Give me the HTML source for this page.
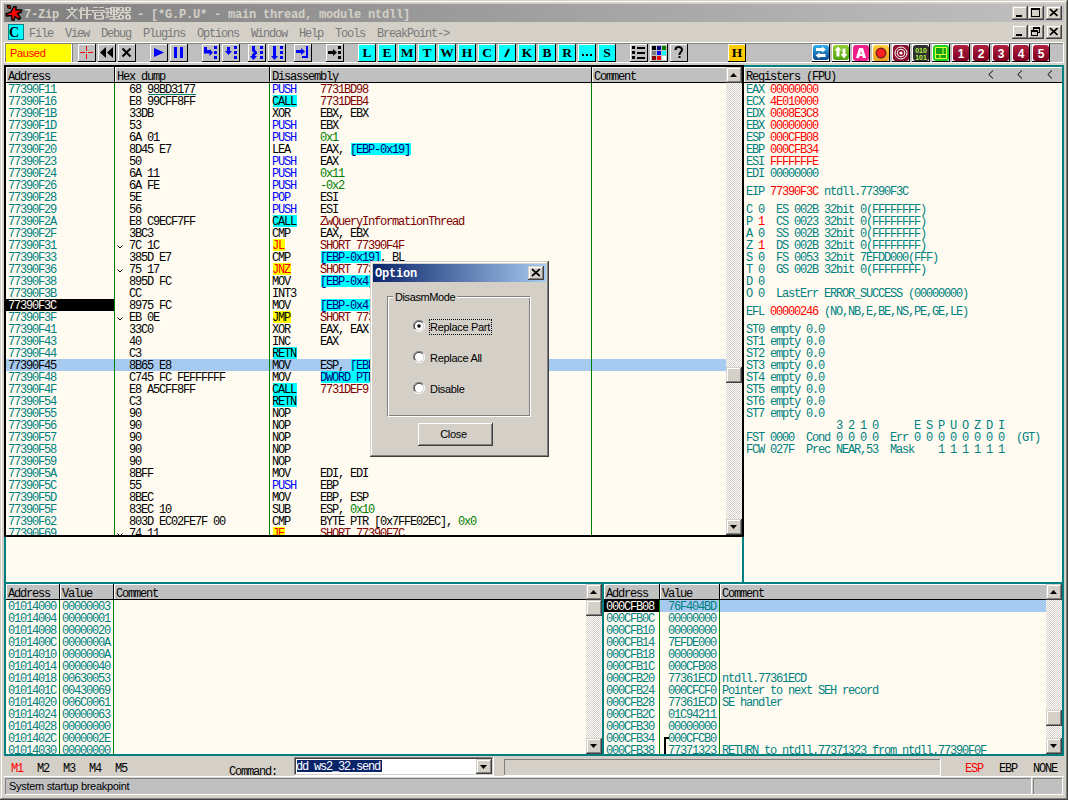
<!DOCTYPE html><html><head><meta charset="utf-8"><style>
*{margin:0;padding:0}
html,body{width:1068px;height:800px;overflow:hidden;background:#d4d0c8}
body{position:relative}
div,svg{position:absolute}
div div, div svg{position:absolute}
.m{font-family:"Liberation Mono",monospace;font-size:12px;letter-spacing:-1.2px;line-height:12px;white-space:pre;margin-left:-1px}
.t{padding-top:1px}
.tt{font-family:"Liberation Mono",monospace;font-weight:bold;font-size:12px;letter-spacing:-0.2px;line-height:12px;white-space:pre}
.mb{font-family:"Liberation Serif",serif;font-weight:bold;line-height:14px;white-space:pre}
.lb{font-family:"Liberation Serif",serif;font-weight:bold;font-size:13.5px;line-height:16px;white-space:pre}
.qb{font-family:"Liberation Sans",sans-serif;font-weight:bold;font-size:15px;line-height:16px;white-space:pre}
.s{font-family:"Liberation Sans",sans-serif;font-size:11px;line-height:13px;letter-spacing:-0.3px;white-space:pre}
</style></head><body><div style="left:0px;top:0px;width:1068px;height:800px;background:#404040;"></div>
<div style="left:0px;top:0px;width:1067px;height:799px;background:#d4d0c8;"></div>
<div style="left:1px;top:1px;width:1066px;height:798px;background:#808080;"></div>
<div style="left:1px;top:1px;width:1065px;height:797px;background:#fff;"></div>
<div style="left:2px;top:2px;width:1064px;height:796px;background:#d4d0c8;"></div>
<div style="left:4px;top:4px;width:1060px;height:18px;background:linear-gradient(to right,#808080,#c0c0c0)"></div>
<svg style="left:4px;top:4px" width="20" height="18" viewBox="0 0 20 18">
<path d="M3.5 1.5 L6 1.5 L6.5 4.5 L4 4 Z" fill="#ff0000" stroke="#000" stroke-width="1.2" stroke-linejoin="round"/>
<path d="M9.5 3 L12 2.5 L12 6 L17.5 6 L17.5 8 L13.5 9.5 L16.5 14 L15 15.5 L11 12.5 L10 16 L8 16 L7.5 11.5 L2.5 12 L2 10 L7 8 Z" fill="#ff0000" stroke="#000" stroke-width="1.4" stroke-linejoin="round"/>
</svg>
<div class="tt" style="left:24px;top:9px;color:#d4d0c8;">7-Zip</div>
<svg style="left:0;top:0" width="140" height="22" fill="none" stroke="#d4d0c8" stroke-width="1"><path d="M71.5 7v2 M66 9.5h11 M68 10 L76.5 19 M75 10 L66 19 M81.5 7 L79 11.5 M80.5 10v9 M83.5 8 L82.5 10 M82 10.5h9 M80 14.5h11 M86.5 7v12 M93 7.5h4 M99 7.5h4 M92.5 10.5h11 M92.5 10.5v2 M103.5 10.5v2 M94.5 12.5v6.5 M94.5 12.5h7v3h-7 M94.5 15.5h8v3.5h-8 M105 8.5h4 M105 12.5h4 M107 8.5v9 M105 18 L109 16.5 M110.5 7.5h6v7h-6z M110.5 11h6 M113.5 7.5v11.5 M110 16.5h7 M109 19h9 M118.5 7.5h4v3h-4z M125.5 7.5h4v3h-4z M118.5 15.5h4v3.5h-4z M125.5 15.5h4v3.5h-4z M118 12.5h12 M124 10.5 L119 15 M124 12.5 L129 15 M127 11v1 "/><path transform="translate(1 0)" d="M71.5 7v2 M66 9.5h11 M68 10 L76.5 19 M75 10 L66 19 M81.5 7 L79 11.5 M80.5 10v9 M83.5 8 L82.5 10 M82 10.5h9 M80 14.5h11 M86.5 7v12 M93 7.5h4 M99 7.5h4 M92.5 10.5h11 M92.5 10.5v2 M103.5 10.5v2 M94.5 12.5v6.5 M94.5 12.5h7v3h-7 M94.5 15.5h8v3.5h-8 M105 8.5h4 M105 12.5h4 M107 8.5v9 M105 18 L109 16.5 M110.5 7.5h6v7h-6z M110.5 11h6 M113.5 7.5v11.5 M110 16.5h7 M109 19h9 M118.5 7.5h4v3h-4z M125.5 7.5h4v3h-4z M118.5 15.5h4v3.5h-4z M125.5 15.5h4v3.5h-4z M118 12.5h12 M124 10.5 L119 15 M124 12.5 L129 15 M127 11v1 "/></svg>
<div class="tt" style="left:130px;top:9px;color:#d4d0c8;"> - [*G.P.U* - main thread, module ntdll]</div>
<div style="left:1012px;top:6px;width:16px;height:14px;background:#404040;"></div>
<div style="left:1012px;top:6px;width:15px;height:13px;background:#d4d0c8;"></div>
<div style="left:1013px;top:7px;width:14px;height:12px;background:#808080;"></div>
<div style="left:1013px;top:7px;width:13px;height:11px;background:#fff;"></div>
<div style="left:1014px;top:8px;width:12px;height:10px;background:#d4d0c8;"></div>
<div style="left:1028px;top:6px;width:16px;height:14px;background:#404040;"></div>
<div style="left:1028px;top:6px;width:15px;height:13px;background:#d4d0c8;"></div>
<div style="left:1029px;top:7px;width:14px;height:12px;background:#808080;"></div>
<div style="left:1029px;top:7px;width:13px;height:11px;background:#fff;"></div>
<div style="left:1030px;top:8px;width:12px;height:10px;background:#d4d0c8;"></div>
<div style="left:1046px;top:6px;width:16px;height:14px;background:#404040;"></div>
<div style="left:1046px;top:6px;width:15px;height:13px;background:#d4d0c8;"></div>
<div style="left:1047px;top:7px;width:14px;height:12px;background:#808080;"></div>
<div style="left:1047px;top:7px;width:13px;height:11px;background:#fff;"></div>
<div style="left:1048px;top:8px;width:12px;height:10px;background:#d4d0c8;"></div>
<svg style="left:1012px;top:6px" width="50" height="14"><rect x="4" y="9" width="6" height="2" fill="#000"/><rect x="19.5" y="2.5" width="8" height="8" fill="none" stroke="#000"/><rect x="19" y="2" width="9" height="2" fill="#000"/><path d="M38 3.2 L45.5 9.8 M45.5 3.2 L38 9.8" stroke="#000" stroke-width="1.7"/></svg>
<div style="left:8px;top:24px;width:16px;height:16px;background:#008080;"></div>
<div style="left:9px;top:25px;width:14px;height:14px;background:#00ffff;"></div>
<div class="mb" style="left:9px;top:26px;color:#000;font-size:14px;">C</div>
<div class="m" style="left:30px;top:28px;color:#787878;">File</div>
<div class="m" style="left:66px;top:28px;color:#787878;">View</div>
<div class="m" style="left:102px;top:28px;color:#787878;">Debug</div>
<div class="m" style="left:144px;top:28px;color:#787878;">Plugins</div>
<div class="m" style="left:198px;top:28px;color:#787878;">Options</div>
<div class="m" style="left:252px;top:28px;color:#787878;">Window</div>
<div class="m" style="left:300px;top:28px;color:#787878;">Help</div>
<div class="m" style="left:336px;top:28px;color:#787878;">Tools</div>
<div class="m" style="left:378px;top:28px;color:#787878;">BreakPoint-&gt;</div>
<div style="left:1012px;top:25px;width:16px;height:14px;background:#404040;"></div>
<div style="left:1012px;top:25px;width:15px;height:13px;background:#d4d0c8;"></div>
<div style="left:1013px;top:26px;width:14px;height:12px;background:#808080;"></div>
<div style="left:1013px;top:26px;width:13px;height:11px;background:#fff;"></div>
<div style="left:1014px;top:27px;width:12px;height:10px;background:#d4d0c8;"></div>
<div style="left:1028px;top:25px;width:16px;height:14px;background:#404040;"></div>
<div style="left:1028px;top:25px;width:15px;height:13px;background:#d4d0c8;"></div>
<div style="left:1029px;top:26px;width:14px;height:12px;background:#808080;"></div>
<div style="left:1029px;top:26px;width:13px;height:11px;background:#fff;"></div>
<div style="left:1030px;top:27px;width:12px;height:10px;background:#d4d0c8;"></div>
<div style="left:1046px;top:25px;width:16px;height:14px;background:#404040;"></div>
<div style="left:1046px;top:25px;width:15px;height:13px;background:#d4d0c8;"></div>
<div style="left:1047px;top:26px;width:14px;height:12px;background:#808080;"></div>
<div style="left:1047px;top:26px;width:13px;height:11px;background:#fff;"></div>
<div style="left:1048px;top:27px;width:12px;height:10px;background:#d4d0c8;"></div>
<svg style="left:1012px;top:25px" width="50" height="14"><rect x="4" y="9" width="6" height="2" fill="#000"/><rect x="21.5" y="2.5" width="6" height="5" fill="none" stroke="#000"/><rect x="21" y="2" width="7" height="2" fill="#000"/><rect x="19.5" y="5.5" width="6" height="5" fill="#d4d0c8" stroke="#000"/><rect x="19" y="5" width="7" height="2" fill="#000"/><path d="M38 3.2 L45.5 9.8 M45.5 3.2 L38 9.8" stroke="#000" stroke-width="1.7"/></svg>
<div style="left:4px;top:42px;width:1060px;height:1px;background:#fff;"></div>
<div style="left:4px;top:42px;width:1px;height:21px;background:#fff;"></div>
<div style="left:5px;top:43px;width:1058px;height:19px;background:#c0c0c0;"></div>
<div style="left:4px;top:62px;width:1060px;height:1px;background:#fff;"></div>
<div style="left:1063px;top:42px;width:1px;height:21px;background:#fff;"></div>
<div style="left:5px;top:43px;width:67px;height:19px;background:#808080;"></div>
<div style="left:6px;top:44px;width:66px;height:18px;background:#fff;"></div>
<div style="left:6px;top:44px;width:65px;height:18px;background:#ffff00;"></div>
<div class="s" style="left:10px;top:47px;color:#ff0000;">Paused</div>
<div style="left:72px;top:43px;width:991px;height:1px;background:#808080;"></div>
<div style="left:72px;top:43px;width:1px;height:19px;background:#808080;"></div>
<div style="left:78px;top:44px;width:18px;height:18px;background:#000;"></div>
<div style="left:78px;top:44px;width:17px;height:17px;background:#fff;"></div>
<div style="left:79px;top:45px;width:16px;height:16px;background:#c0c0c0;"></div>
<div style="left:98px;top:44px;width:18px;height:18px;background:#000;"></div>
<div style="left:98px;top:44px;width:17px;height:17px;background:#fff;"></div>
<div style="left:99px;top:45px;width:16px;height:16px;background:#c0c0c0;"></div>
<div style="left:118px;top:44px;width:18px;height:18px;background:#000;"></div>
<div style="left:118px;top:44px;width:17px;height:17px;background:#fff;"></div>
<div style="left:119px;top:45px;width:16px;height:16px;background:#c0c0c0;"></div>
<div style="left:150px;top:44px;width:18px;height:18px;background:#000;"></div>
<div style="left:150px;top:44px;width:17px;height:17px;background:#fff;"></div>
<div style="left:151px;top:45px;width:16px;height:16px;background:#c0c0c0;"></div>
<div style="left:170px;top:44px;width:18px;height:18px;background:#000;"></div>
<div style="left:170px;top:44px;width:17px;height:17px;background:#fff;"></div>
<div style="left:171px;top:45px;width:16px;height:16px;background:#c0c0c0;"></div>
<div style="left:202px;top:44px;width:18px;height:18px;background:#000;"></div>
<div style="left:202px;top:44px;width:17px;height:17px;background:#fff;"></div>
<div style="left:203px;top:45px;width:16px;height:16px;background:#c0c0c0;"></div>
<div style="left:222px;top:44px;width:18px;height:18px;background:#000;"></div>
<div style="left:222px;top:44px;width:17px;height:17px;background:#fff;"></div>
<div style="left:223px;top:45px;width:16px;height:16px;background:#c0c0c0;"></div>
<div style="left:248px;top:44px;width:18px;height:18px;background:#000;"></div>
<div style="left:248px;top:44px;width:17px;height:17px;background:#fff;"></div>
<div style="left:249px;top:45px;width:16px;height:16px;background:#c0c0c0;"></div>
<div style="left:268px;top:44px;width:18px;height:18px;background:#000;"></div>
<div style="left:268px;top:44px;width:17px;height:17px;background:#fff;"></div>
<div style="left:269px;top:45px;width:16px;height:16px;background:#c0c0c0;"></div>
<div style="left:294px;top:44px;width:18px;height:18px;background:#000;"></div>
<div style="left:294px;top:44px;width:17px;height:17px;background:#fff;"></div>
<div style="left:295px;top:45px;width:16px;height:16px;background:#c0c0c0;"></div>
<div style="left:326px;top:44px;width:18px;height:18px;background:#000;"></div>
<div style="left:326px;top:44px;width:17px;height:17px;background:#fff;"></div>
<div style="left:327px;top:45px;width:16px;height:16px;background:#c0c0c0;"></div>
<svg style="left:79px;top:45px" width="16" height="16"><path d="M7.5 1v5 M7.5 9v5 M1 7.5h5 M9 7.5h5" stroke="#f00" stroke-width="1"/><rect x="7" y="7" width="1" height="1" fill="#f00"/></svg>
<svg style="left:99px;top:45px" width="16" height="16"><path d="M1 7.5 L7 2 V13Z M8 7.5 L14 2 V13Z" fill="#000"/></svg>
<svg style="left:119px;top:45px" width="16" height="16"><path d="M3.5 3.5 L11.5 11.5 M11.5 3.5 L3.5 11.5" stroke="#000" stroke-width="2"/></svg>
<svg style="left:151px;top:45px" width="16" height="16"><path d="M3 3 L13 7.5 L3 12Z" fill="#00f"/></svg>
<svg style="left:171px;top:45px" width="16" height="16"><rect x="3" y="2" width="3" height="11" fill="#00f"/><rect x="9" y="2" width="3" height="11" fill="#00f"/></svg>
<svg style="left:203px;top:45px" width="16" height="16"><path d="M1 2 H4 V5 H6.5 V4 L10 7.5 L6.5 11 V8.5 H1 Z" fill="#00f"/><rect x="11" y="1" width="3" height="3" fill="#00f"/><rect x="11" y="6" width="3" height="3" fill="#00f"/><rect x="11" y="11" width="3" height="3" fill="#00f"/></svg>
<svg style="left:223px;top:45px" width="16" height="16"><path d="M4 2 H7 V6 H9 L5.5 10 L2 6 H4 Z" fill="#00f"/><rect x="11" y="1" width="3" height="3" fill="#00f"/><rect x="11" y="6" width="3" height="3" fill="#00f"/><rect x="11" y="11" width="3" height="3" fill="#00f"/></svg>
<svg style="left:249px;top:45px" width="16" height="16"><path d="M3 1 H6 V5 L8 7 V8.5 L6 10.5 V11 H8 L4.5 15 L1 11 H3 V9.5 L5 7.5 L3 6 Z" fill="#00f"/><rect x="11" y="1" width="3" height="3" fill="#00f"/><rect x="11" y="6" width="3" height="3" fill="#00f"/><rect x="11" y="11" width="3" height="3" fill="#00f"/></svg>
<svg style="left:269px;top:45px" width="16" height="16"><path d="M4 1 H7 V11 H9 L5.5 15 L2 11 H4 Z" fill="#00f"/><rect x="11" y="1" width="3" height="3" fill="#00f"/><rect x="11" y="6" width="3" height="3" fill="#00f"/><rect x="11" y="11" width="3" height="3" fill="#00f"/></svg>
<svg style="left:295px;top:45px" width="16" height="16"><path d="M1 5 H6 V3 L10 6.5 L6 10 V8 H1 Z M11 1 H13 V13 H7 V11 H11 Z" fill="#00f"/></svg>
<svg style="left:327px;top:45px" width="16" height="16"><path d="M1 6 H6 V4 L10 7.5 L6 11 V9 H1 Z" fill="#000"/><rect x="11" y="1" width="3" height="3" fill="#000"/><rect x="11" y="6" width="3" height="3" fill="#000"/><rect x="11" y="11" width="3" height="3" fill="#000"/></svg>
<div style="left:358px;top:44px;width:18px;height:18px;background:#000;"></div>
<div style="left:358px;top:44px;width:17px;height:17px;background:#fff;"></div>
<div style="left:359px;top:45px;width:16px;height:16px;background:#00ffff;"></div>
<div class="lb" style="left:359px;top:45px;color:#000;width:16px;text-align:center">L</div>
<div style="left:378px;top:44px;width:18px;height:18px;background:#000;"></div>
<div style="left:378px;top:44px;width:17px;height:17px;background:#fff;"></div>
<div style="left:379px;top:45px;width:16px;height:16px;background:#00ffff;"></div>
<div class="lb" style="left:379px;top:45px;color:#000;width:16px;text-align:center">E</div>
<div style="left:398px;top:44px;width:18px;height:18px;background:#000;"></div>
<div style="left:398px;top:44px;width:17px;height:17px;background:#fff;"></div>
<div style="left:399px;top:45px;width:16px;height:16px;background:#00ffff;"></div>
<div class="lb" style="left:399px;top:45px;color:#000;width:16px;text-align:center">M</div>
<div style="left:418px;top:44px;width:18px;height:18px;background:#000;"></div>
<div style="left:418px;top:44px;width:17px;height:17px;background:#fff;"></div>
<div style="left:419px;top:45px;width:16px;height:16px;background:#00ffff;"></div>
<div class="lb" style="left:419px;top:45px;color:#000;width:16px;text-align:center">T</div>
<div style="left:438px;top:44px;width:18px;height:18px;background:#000;"></div>
<div style="left:438px;top:44px;width:17px;height:17px;background:#fff;"></div>
<div style="left:439px;top:45px;width:16px;height:16px;background:#00ffff;"></div>
<div class="lb" style="left:439px;top:45px;color:#000;width:16px;text-align:center">W</div>
<div style="left:458px;top:44px;width:18px;height:18px;background:#000;"></div>
<div style="left:458px;top:44px;width:17px;height:17px;background:#fff;"></div>
<div style="left:459px;top:45px;width:16px;height:16px;background:#00ffff;"></div>
<div class="lb" style="left:459px;top:45px;color:#000;width:16px;text-align:center">H</div>
<div style="left:478px;top:44px;width:18px;height:18px;background:#000;"></div>
<div style="left:478px;top:44px;width:17px;height:17px;background:#fff;"></div>
<div style="left:479px;top:45px;width:16px;height:16px;background:#00ffff;"></div>
<div class="lb" style="left:479px;top:45px;color:#000;width:16px;text-align:center">C</div>
<div style="left:498px;top:44px;width:18px;height:18px;background:#000;"></div>
<div style="left:498px;top:44px;width:17px;height:17px;background:#fff;"></div>
<div style="left:499px;top:45px;width:16px;height:16px;background:#00ffff;"></div>
<svg style="left:499px;top:45px" width="16" height="16"><path d="M10 4 L6 12" stroke="#000" stroke-width="2"/></svg>
<div style="left:518px;top:44px;width:18px;height:18px;background:#000;"></div>
<div style="left:518px;top:44px;width:17px;height:17px;background:#fff;"></div>
<div style="left:519px;top:45px;width:16px;height:16px;background:#00ffff;"></div>
<div class="lb" style="left:519px;top:45px;color:#000;width:16px;text-align:center">K</div>
<div style="left:538px;top:44px;width:18px;height:18px;background:#000;"></div>
<div style="left:538px;top:44px;width:17px;height:17px;background:#fff;"></div>
<div style="left:539px;top:45px;width:16px;height:16px;background:#00ffff;"></div>
<div class="lb" style="left:539px;top:45px;color:#000;width:16px;text-align:center">B</div>
<div style="left:558px;top:44px;width:18px;height:18px;background:#000;"></div>
<div style="left:558px;top:44px;width:17px;height:17px;background:#fff;"></div>
<div style="left:559px;top:45px;width:16px;height:16px;background:#00ffff;"></div>
<div class="lb" style="left:559px;top:45px;color:#000;width:16px;text-align:center">R</div>
<div style="left:578px;top:44px;width:18px;height:18px;background:#000;"></div>
<div style="left:578px;top:44px;width:17px;height:17px;background:#fff;"></div>
<div style="left:579px;top:45px;width:16px;height:16px;background:#00ffff;"></div>
<svg style="left:579px;top:45px" width="16" height="16"><rect x="3" y="9" width="2" height="2"/><rect x="7" y="9" width="2" height="2"/><rect x="11" y="9" width="2" height="2"/></svg>
<div style="left:598px;top:44px;width:18px;height:18px;background:#000;"></div>
<div style="left:598px;top:44px;width:17px;height:17px;background:#fff;"></div>
<div style="left:599px;top:45px;width:16px;height:16px;background:#00ffff;"></div>
<div class="lb" style="left:599px;top:45px;color:#000;width:16px;text-align:center">S</div>
<div style="left:630px;top:44px;width:18px;height:18px;background:#000;"></div>
<div style="left:630px;top:44px;width:17px;height:17px;background:#fff;"></div>
<div style="left:631px;top:45px;width:16px;height:16px;background:#c0c0c0;"></div>
<div style="left:650px;top:44px;width:18px;height:18px;background:#000;"></div>
<div style="left:650px;top:44px;width:17px;height:17px;background:#fff;"></div>
<div style="left:651px;top:45px;width:16px;height:16px;background:#c0c0c0;"></div>
<div style="left:670px;top:44px;width:18px;height:18px;background:#000;"></div>
<div style="left:670px;top:44px;width:17px;height:17px;background:#fff;"></div>
<div style="left:671px;top:45px;width:16px;height:16px;background:#c0c0c0;"></div>
<svg style="left:631px;top:45px" width="16" height="16"><rect x="1" y="1" width="3" height="3"/><rect x="6" y="2" width="8" height="2"/><rect x="1" y="6" width="3" height="3"/><rect x="6" y="7" width="8" height="2"/><rect x="1" y="11" width="3" height="3"/><rect x="6" y="12" width="8" height="2"/></svg>
<svg style="left:651px;top:45px" width="16" height="16"><rect x="1" y="1" width="4" height="4" fill="#000"/><rect x="6" y="1" width="4" height="4" fill="#000080"/><rect x="11" y="1" width="4" height="4" fill="#008000"/><rect x="1" y="6" width="4" height="4" fill="#808080"/><rect x="6" y="6" width="4" height="4" fill="#0000ff"/><rect x="11" y="6" width="4" height="4" fill="#00ffff"/><rect x="1" y="11" width="4" height="4" fill="#800000"/><rect x="6" y="11" width="4" height="4" fill="#ff0000"/><rect x="11" y="11" width="4" height="4" fill="#fff"/></svg>
<svg style="left:671px;top:45px" width="16" height="16"><path d="M4.5 5 C4.5 2.5 6 2 7.5 2 C9.5 2 11 3 11 4.8 C11 7 8.5 7.3 8.5 9.5 V10" stroke="#000" stroke-width="2" fill="none"/><rect x="7.5" y="11" width="2" height="2"/></svg>
<div style="left:728px;top:44px;width:18px;height:18px;background:#000;"></div>
<div style="left:728px;top:44px;width:17px;height:17px;background:#fff;"></div>
<div style="left:729px;top:45px;width:16px;height:16px;background:#ffcc00;"></div>
<div class="lb" style="left:729px;top:45px;color:#000;width:16px;text-align:center">H</div>
<div style="left:812px;top:44px;width:18px;height:18px;background:#000;"></div>
<div style="left:812px;top:44px;width:17px;height:17px;background:#fff;"></div>
<div style="left:813px;top:45px;width:16px;height:16px;background:#fff;"></div>
<svg style="left:813px;top:45px" width="16" height="16"><defs><linearGradient id="g1" x1="0" y1="0" x2="0" y2="1"><stop offset="0" stop-color="#30b0f0"/><stop offset="1" stop-color="#0a4a90"/></linearGradient></defs><rect x="0" y="0" width="16" height="15" rx="3" fill="url(#g1)"/><path d="M3 3 H9 V1.5 L13 4.5 L9 7.5 V6 H3 Z M12.5 9 H6.5 V7.5 L2.5 10.5 L6.5 13.5 V12 H12.5 Z" fill="#fff"/></svg>
<div style="left:832px;top:44px;width:18px;height:18px;background:#000;"></div>
<div style="left:832px;top:44px;width:17px;height:17px;background:#fff;"></div>
<div style="left:833px;top:45px;width:16px;height:16px;background:#fff;"></div>
<svg style="left:833px;top:45px" width="16" height="16"><defs><linearGradient id="g2" x1="0" y1="0" x2="0" y2="1"><stop offset="0" stop-color="#90d030"/><stop offset="1" stop-color="#50a010"/></linearGradient></defs><rect x="0" y="0" width="16" height="15" rx="3" fill="url(#g2)"/><path d="M5 1.5 L8.5 5.5 H6.5 V11.5 H3.5 V5.5 H1.5 Z M11 13.5 L14.5 9 H12.5 V3.5 H9.5 V9 H7.5 Z" fill="#fff"/></svg>
<div style="left:852px;top:44px;width:18px;height:18px;background:#000;"></div>
<div style="left:852px;top:44px;width:17px;height:17px;background:#fff;"></div>
<div style="left:853px;top:45px;width:16px;height:16px;background:#fff;"></div>
<svg style="left:853px;top:45px" width="16" height="16"><rect x="0" y="0" width="16" height="16" rx="3" fill="#f0208a"/><path d="M6 3h4l3 10h-3l-.6-2h-2.8l-.6 2h-3z M7.2 9h1.6l-.8-3z" fill="#fff"/></svg>
<div style="left:872px;top:44px;width:18px;height:18px;background:#000;"></div>
<div style="left:872px;top:44px;width:17px;height:17px;background:#fff;"></div>
<div style="left:873px;top:45px;width:16px;height:16px;background:#fff;"></div>
<svg style="left:873px;top:45px" width="16" height="16"><defs><linearGradient id="g4" x1="0" y1="0" x2="0" y2="1"><stop offset="0" stop-color="#ffd040"/><stop offset="1" stop-color="#e8a020"/></linearGradient></defs><rect x="0" y="0" width="16" height="16" rx="3" fill="url(#g4)"/><circle cx="8" cy="8" r="5.5" fill="#802020"/><circle cx="8" cy="8" r="4" fill="#ff2020"/></svg>
<div style="left:892px;top:44px;width:18px;height:18px;background:#000;"></div>
<div style="left:892px;top:44px;width:17px;height:17px;background:#fff;"></div>
<div style="left:893px;top:45px;width:16px;height:16px;background:#fff;"></div>
<svg style="left:893px;top:45px" width="16" height="16"><rect x="0" y="0" width="16" height="16" rx="3" fill="#8a1030"/><circle cx="8" cy="8" r="6" fill="none" stroke="#fff" stroke-width="1"/><circle cx="8" cy="8" r="3.8" fill="none" stroke="#fff" stroke-width="1"/><circle cx="8" cy="8" r="1.6" fill="#fff"/></svg>
<div style="left:912px;top:44px;width:18px;height:18px;background:#000;"></div>
<div style="left:912px;top:44px;width:17px;height:17px;background:#fff;"></div>
<div style="left:913px;top:45px;width:16px;height:16px;background:#fff;"></div>
<svg style="left:913px;top:45px" width="16" height="16"><rect x="0" y="0" width="16" height="16" rx="3" fill="#303030"/><text x="8" y="7.5" font-family="Liberation Sans" font-weight="bold" font-size="7" fill="#b0f040" text-anchor="middle">010</text><text x="8" y="14.5" font-family="Liberation Sans" font-weight="bold" font-size="7" fill="#b0f040" text-anchor="middle">101</text></svg>
<div style="left:932px;top:44px;width:18px;height:18px;background:#000;"></div>
<div style="left:932px;top:44px;width:17px;height:17px;background:#fff;"></div>
<div style="left:933px;top:45px;width:16px;height:16px;background:#fff;"></div>
<svg style="left:933px;top:45px" width="16" height="16"><rect x="0" y="0" width="16" height="16" rx="3" fill="#20d020"/><rect x="2.5" y="2.5" width="11" height="11" fill="#10a010" stroke="#e0ff40"/><path d="M10 2.5v7 M2.5 9.5h11 M7 9.5v4" stroke="#e0ff40"/></svg>
<div style="left:952px;top:44px;width:18px;height:18px;background:#000;"></div>
<div style="left:952px;top:44px;width:17px;height:17px;background:#fff;"></div>
<div style="left:953px;top:45px;width:16px;height:16px;background:#fff;"></div>
<svg style="left:953px;top:45px" width="16" height="16"><defs><linearGradient id="gr0" x1="0" y1="0" x2="0" y2="1"><stop offset="0" stop-color="#b02040"/><stop offset="1" stop-color="#800020"/></linearGradient></defs><rect x="0" y="0" width="16" height="16" rx="3" fill="url(#gr0)"/><text x="8" y="13" font-family="Liberation Sans" font-weight="bold" font-size="12" fill="#fff" text-anchor="middle">1</text></svg>
<div style="left:972px;top:44px;width:18px;height:18px;background:#000;"></div>
<div style="left:972px;top:44px;width:17px;height:17px;background:#fff;"></div>
<div style="left:973px;top:45px;width:16px;height:16px;background:#fff;"></div>
<svg style="left:973px;top:45px" width="16" height="16"><defs><linearGradient id="gr1" x1="0" y1="0" x2="0" y2="1"><stop offset="0" stop-color="#b02040"/><stop offset="1" stop-color="#800020"/></linearGradient></defs><rect x="0" y="0" width="16" height="16" rx="3" fill="url(#gr1)"/><text x="8" y="13" font-family="Liberation Sans" font-weight="bold" font-size="12" fill="#fff" text-anchor="middle">2</text></svg>
<div style="left:992px;top:44px;width:18px;height:18px;background:#000;"></div>
<div style="left:992px;top:44px;width:17px;height:17px;background:#fff;"></div>
<div style="left:993px;top:45px;width:16px;height:16px;background:#fff;"></div>
<svg style="left:993px;top:45px" width="16" height="16"><defs><linearGradient id="gr2" x1="0" y1="0" x2="0" y2="1"><stop offset="0" stop-color="#b02040"/><stop offset="1" stop-color="#800020"/></linearGradient></defs><rect x="0" y="0" width="16" height="16" rx="3" fill="url(#gr2)"/><text x="8" y="13" font-family="Liberation Sans" font-weight="bold" font-size="12" fill="#fff" text-anchor="middle">3</text></svg>
<div style="left:1012px;top:44px;width:18px;height:18px;background:#000;"></div>
<div style="left:1012px;top:44px;width:17px;height:17px;background:#fff;"></div>
<div style="left:1013px;top:45px;width:16px;height:16px;background:#fff;"></div>
<svg style="left:1013px;top:45px" width="16" height="16"><defs><linearGradient id="gr3" x1="0" y1="0" x2="0" y2="1"><stop offset="0" stop-color="#b02040"/><stop offset="1" stop-color="#800020"/></linearGradient></defs><rect x="0" y="0" width="16" height="16" rx="3" fill="url(#gr3)"/><text x="8" y="13" font-family="Liberation Sans" font-weight="bold" font-size="12" fill="#fff" text-anchor="middle">4</text></svg>
<div style="left:1032px;top:44px;width:18px;height:18px;background:#000;"></div>
<div style="left:1032px;top:44px;width:17px;height:17px;background:#fff;"></div>
<div style="left:1033px;top:45px;width:16px;height:16px;background:#fff;"></div>
<svg style="left:1033px;top:45px" width="16" height="16"><defs><linearGradient id="gr4" x1="0" y1="0" x2="0" y2="1"><stop offset="0" stop-color="#b02040"/><stop offset="1" stop-color="#800020"/></linearGradient></defs><rect x="0" y="0" width="16" height="16" rx="3" fill="url(#gr4)"/><text x="8" y="13" font-family="Liberation Sans" font-weight="bold" font-size="12" fill="#fff" text-anchor="middle">5</text></svg>
<div style="left:4px;top:65px;width:740px;height:472px;background:#000;"></div>
<div style="left:6px;top:67px;width:736px;height:468px;background:#fffbf0;"></div>
<div style="left:6px;top:67px;width:720px;height:16px;background:#c0c0c0;"></div>
<div style="left:6px;top:67px;width:720px;height:1px;background:#fff;"></div>
<div style="left:6px;top:82px;width:720px;height:1px;background:#000;"></div>
<div style="left:6px;top:67px;width:1px;height:15px;background:#fff;"></div>
<div class="m" style="left:9px;top:71px;color:#000;">Address</div>
<div style="left:114px;top:67px;width:1px;height:16px;background:#000;"></div>
<div style="left:115px;top:67px;width:1px;height:15px;background:#fff;"></div>
<div class="m" style="left:118px;top:71px;color:#000;">Hex dump</div>
<div style="left:269px;top:67px;width:1px;height:16px;background:#000;"></div>
<div style="left:270px;top:67px;width:1px;height:15px;background:#fff;"></div>
<div class="m" style="left:273px;top:71px;color:#000;">Disassembly</div>
<div style="left:591px;top:67px;width:1px;height:16px;background:#000;"></div>
<div style="left:592px;top:67px;width:1px;height:15px;background:#fff;"></div>
<div class="m" style="left:595px;top:71px;color:#000;">Comment</div>
<div style="left:6px;top:83px;width:720px;height:452px;overflow:hidden">
<div class="m t" style="left:3px;top:0px;color:#008080;">77390F11</div>
<div class="m t" style="left:124px;top:0px;color:#000;">68 98BD3177</div>
<div style="left:142px;top:11px;width:48px;height:1px;background:#008080;"></div>
<div class="m t" style="left:267px;top:0px;color:#0000ff;">PUSH</div>
<div class="m t" style="left:315px;top:0px;color:#800000;">7731BD98</div>
<div class="m t" style="left:3px;top:12px;color:#008080;">77390F16</div>
<div class="m t" style="left:124px;top:12px;color:#000;">E8 99CFF8FF</div>
<div style="left:267px;top:12px;width:24px;height:12px;background:#00ffff;"></div>
<div class="m t" style="left:267px;top:12px;color:#000;">CALL</div>
<div class="m t" style="left:315px;top:12px;color:#800000;">7731DEB4</div>
<div class="m t" style="left:3px;top:24px;color:#008080;">77390F1B</div>
<div class="m t" style="left:124px;top:24px;color:#000;">33DB</div>
<div class="m t" style="left:267px;top:24px;color:#000;">XOR</div>
<div class="m t" style="left:315px;top:24px;color:#000;">EBX, EBX</div>
<div class="m t" style="left:3px;top:36px;color:#008080;">77390F1D</div>
<div class="m t" style="left:124px;top:36px;color:#000;">53</div>
<div class="m t" style="left:267px;top:36px;color:#0000ff;">PUSH</div>
<div class="m t" style="left:315px;top:36px;color:#000;">EBX</div>
<div class="m t" style="left:3px;top:48px;color:#008080;">77390F1E</div>
<div class="m t" style="left:124px;top:48px;color:#000;">6A 01</div>
<div class="m t" style="left:267px;top:48px;color:#0000ff;">PUSH</div>
<div class="m t" style="left:315px;top:48px;color:#008000;">0x1</div>
<div class="m t" style="left:3px;top:60px;color:#008080;">77390F20</div>
<div class="m t" style="left:124px;top:60px;color:#000;">8D45 E7</div>
<div class="m t" style="left:267px;top:60px;color:#000;">LEA</div>
<div class="m t" style="left:315px;top:60px;color:#000;">EAX, </div>
<div style="left:345px;top:60px;width:60px;height:12px;background:#00ffff;"></div>
<div class="m t" style="left:345px;top:60px;color:#000080;">[EBP-0x19]</div>
<div class="m t" style="left:3px;top:72px;color:#008080;">77390F23</div>
<div class="m t" style="left:124px;top:72px;color:#000;">50</div>
<div class="m t" style="left:267px;top:72px;color:#0000ff;">PUSH</div>
<div class="m t" style="left:315px;top:72px;color:#000;">EAX</div>
<div class="m t" style="left:3px;top:84px;color:#008080;">77390F24</div>
<div class="m t" style="left:124px;top:84px;color:#000;">6A 11</div>
<div class="m t" style="left:267px;top:84px;color:#0000ff;">PUSH</div>
<div class="m t" style="left:315px;top:84px;color:#008000;">0x11</div>
<div class="m t" style="left:3px;top:96px;color:#008080;">77390F26</div>
<div class="m t" style="left:124px;top:96px;color:#000;">6A FE</div>
<div class="m t" style="left:267px;top:96px;color:#0000ff;">PUSH</div>
<div class="m t" style="left:315px;top:96px;color:#008000;">-0x2</div>
<div class="m t" style="left:3px;top:108px;color:#008080;">77390F28</div>
<div class="m t" style="left:124px;top:108px;color:#000;">5E</div>
<div class="m t" style="left:267px;top:108px;color:#0000ff;">POP</div>
<div class="m t" style="left:315px;top:108px;color:#000;">ESI</div>
<div class="m t" style="left:3px;top:120px;color:#008080;">77390F29</div>
<div class="m t" style="left:124px;top:120px;color:#000;">56</div>
<div class="m t" style="left:267px;top:120px;color:#0000ff;">PUSH</div>
<div class="m t" style="left:315px;top:120px;color:#000;">ESI</div>
<div class="m t" style="left:3px;top:132px;color:#008080;">77390F2A</div>
<div class="m t" style="left:124px;top:132px;color:#000;">E8 C9ECF7FF</div>
<div style="left:267px;top:132px;width:24px;height:12px;background:#00ffff;"></div>
<div class="m t" style="left:267px;top:132px;color:#000;">CALL</div>
<div class="m t" style="left:315px;top:132px;color:#800000;">ZwQueryInformationThread</div>
<div class="m t" style="left:3px;top:144px;color:#008080;">77390F2F</div>
<div class="m t" style="left:124px;top:144px;color:#000;">3BC3</div>
<div class="m t" style="left:267px;top:144px;color:#000;">CMP</div>
<div class="m t" style="left:315px;top:144px;color:#000;">EAX, EBX</div>
<div class="m t" style="left:3px;top:156px;color:#008080;">77390F31</div>
<svg style="left:111px;top:162px" width="6" height="4"><path d="M0.5 0.5 L3 3 L5.5 0.5" stroke="#000" fill="none"/></svg>
<div class="m t" style="left:124px;top:156px;color:#000;">7C 1C</div>
<div style="left:267px;top:156px;width:12px;height:12px;background:#ffff00;"></div>
<div class="m t" style="left:267px;top:156px;color:#ff0000;">JL</div>
<div class="m t" style="left:315px;top:156px;color:#800000;">SHORT 77390F4F</div>
<div class="m t" style="left:3px;top:168px;color:#008080;">77390F33</div>
<div class="m t" style="left:124px;top:168px;color:#000;">385D E7</div>
<div class="m t" style="left:267px;top:168px;color:#000;">CMP</div>
<div style="left:315px;top:168px;width:60px;height:12px;background:#00ffff;"></div>
<div class="m t" style="left:315px;top:168px;color:#000080;">[EBP-0x19]</div>
<div class="m t" style="left:375px;top:168px;color:#000;">, BL</div>
<div class="m t" style="left:3px;top:180px;color:#008080;">77390F36</div>
<svg style="left:111px;top:186px" width="6" height="4"><path d="M0.5 0.5 L3 3 L5.5 0.5" stroke="#000" fill="none"/></svg>
<div class="m t" style="left:124px;top:180px;color:#000;">75 17</div>
<div style="left:267px;top:180px;width:18px;height:12px;background:#ffff00;"></div>
<div class="m t" style="left:267px;top:180px;color:#ff0000;">JNZ</div>
<div class="m t" style="left:315px;top:180px;color:#800000;">SHORT 77390F4F</div>
<div class="m t" style="left:3px;top:192px;color:#008080;">77390F38</div>
<div class="m t" style="left:124px;top:192px;color:#000;">895D FC</div>
<div class="m t" style="left:267px;top:192px;color:#000;">MOV</div>
<div style="left:315px;top:192px;width:54px;height:12px;background:#00ffff;"></div>
<div class="m t" style="left:315px;top:192px;color:#000080;">[EBP-0x4]</div>
<div class="m t" style="left:369px;top:192px;color:#000;">, EBX</div>
<div class="m t" style="left:3px;top:204px;color:#008080;">77390F3B</div>
<div class="m t" style="left:124px;top:204px;color:#000;">CC</div>
<div class="m t" style="left:267px;top:204px;color:#000;">INT3</div>
<div style="left:0px;top:216px;width:108px;height:12px;background:#000;"></div>
<div class="m t" style="left:3px;top:216px;color:#fffbf0;">77390F3C</div>
<div class="m t" style="left:124px;top:216px;color:#000;">8975 FC</div>
<div class="m t" style="left:267px;top:216px;color:#000;">MOV</div>
<div style="left:315px;top:216px;width:54px;height:12px;background:#00ffff;"></div>
<div class="m t" style="left:315px;top:216px;color:#000080;">[EBP-0x4]</div>
<div class="m t" style="left:369px;top:216px;color:#000;">, ESI</div>
<div class="m t" style="left:3px;top:228px;color:#008080;">77390F3F</div>
<svg style="left:111px;top:234px" width="6" height="4"><path d="M0.5 0.5 L3 3 L5.5 0.5" stroke="#000" fill="none"/></svg>
<div class="m t" style="left:124px;top:228px;color:#000;">EB 0E</div>
<div style="left:267px;top:228px;width:18px;height:12px;background:#ffff00;"></div>
<div class="m t" style="left:267px;top:228px;color:#000;">JMP</div>
<div class="m t" style="left:315px;top:228px;color:#800000;">SHORT 77390F4F</div>
<div class="m t" style="left:3px;top:240px;color:#008080;">77390F41</div>
<div class="m t" style="left:124px;top:240px;color:#000;">33C0</div>
<div class="m t" style="left:267px;top:240px;color:#000;">XOR</div>
<div class="m t" style="left:315px;top:240px;color:#000;">EAX, EAX</div>
<div class="m t" style="left:3px;top:252px;color:#008080;">77390F43</div>
<div class="m t" style="left:124px;top:252px;color:#000;">40</div>
<div class="m t" style="left:267px;top:252px;color:#000;">INC</div>
<div class="m t" style="left:315px;top:252px;color:#000;">EAX</div>
<div class="m t" style="left:3px;top:264px;color:#008080;">77390F44</div>
<div class="m t" style="left:124px;top:264px;color:#000;">C3</div>
<div style="left:267px;top:264px;width:24px;height:12px;background:#00ffff;"></div>
<div class="m t" style="left:267px;top:264px;color:#000;">RETN</div>
<div style="left:0px;top:276px;width:720px;height:12px;background:#a6caf0;"></div>
<div class="m t" style="left:3px;top:276px;color:#000;">77390F45</div>
<div class="m t" style="left:124px;top:276px;color:#000;">8B65 E8</div>
<div class="m t" style="left:267px;top:276px;color:#000;">MOV</div>
<div class="m t" style="left:315px;top:276px;color:#000;">ESP, </div>
<div style="left:345px;top:276px;width:60px;height:12px;background:#00ffff;"></div>
<div class="m t" style="left:345px;top:276px;color:#000080;">[EBP-0x18]</div>
<div class="m t" style="left:3px;top:288px;color:#008080;">77390F48</div>
<div class="m t" style="left:124px;top:288px;color:#000;">C745 FC FEFFFFFF</div>
<div class="m t" style="left:267px;top:288px;color:#000;">MOV</div>
<div style="left:315px;top:288px;width:114px;height:12px;background:#00ffff;"></div>
<div class="m t" style="left:315px;top:288px;color:#000080;">DWORD PTR [EBP-0x4]</div>
<div class="m t" style="left:429px;top:288px;color:#008000;">, -0x2</div>
<div class="m t" style="left:3px;top:300px;color:#008080;">77390F4F</div>
<div class="m t" style="left:124px;top:300px;color:#000;">E8 A5CFF8FF</div>
<div style="left:267px;top:300px;width:24px;height:12px;background:#00ffff;"></div>
<div class="m t" style="left:267px;top:300px;color:#000;">CALL</div>
<div class="m t" style="left:315px;top:300px;color:#800000;">7731DEF9</div>
<div class="m t" style="left:3px;top:312px;color:#008080;">77390F54</div>
<div class="m t" style="left:124px;top:312px;color:#000;">C3</div>
<div style="left:267px;top:312px;width:24px;height:12px;background:#00ffff;"></div>
<div class="m t" style="left:267px;top:312px;color:#000;">RETN</div>
<div class="m t" style="left:3px;top:324px;color:#008080;">77390F55</div>
<div class="m t" style="left:124px;top:324px;color:#000;">90</div>
<div class="m t" style="left:267px;top:324px;color:#000;">NOP</div>
<div class="m t" style="left:3px;top:336px;color:#008080;">77390F56</div>
<div class="m t" style="left:124px;top:336px;color:#000;">90</div>
<div class="m t" style="left:267px;top:336px;color:#000;">NOP</div>
<div class="m t" style="left:3px;top:348px;color:#008080;">77390F57</div>
<div class="m t" style="left:124px;top:348px;color:#000;">90</div>
<div class="m t" style="left:267px;top:348px;color:#000;">NOP</div>
<div class="m t" style="left:3px;top:360px;color:#008080;">77390F58</div>
<div class="m t" style="left:124px;top:360px;color:#000;">90</div>
<div class="m t" style="left:267px;top:360px;color:#000;">NOP</div>
<div class="m t" style="left:3px;top:372px;color:#008080;">77390F59</div>
<div class="m t" style="left:124px;top:372px;color:#000;">90</div>
<div class="m t" style="left:267px;top:372px;color:#000;">NOP</div>
<div class="m t" style="left:3px;top:384px;color:#008080;">77390F5A</div>
<div class="m t" style="left:124px;top:384px;color:#000;">8BFF</div>
<div class="m t" style="left:267px;top:384px;color:#000;">MOV</div>
<div class="m t" style="left:315px;top:384px;color:#000;">EDI, EDI</div>
<div class="m t" style="left:3px;top:396px;color:#008080;">77390F5C</div>
<div class="m t" style="left:124px;top:396px;color:#000;">55</div>
<div class="m t" style="left:267px;top:396px;color:#0000ff;">PUSH</div>
<div class="m t" style="left:315px;top:396px;color:#000;">EBP</div>
<div class="m t" style="left:3px;top:408px;color:#008080;">77390F5D</div>
<div class="m t" style="left:124px;top:408px;color:#000;">8BEC</div>
<div class="m t" style="left:267px;top:408px;color:#000;">MOV</div>
<div class="m t" style="left:315px;top:408px;color:#000;">EBP, ESP</div>
<div class="m t" style="left:3px;top:420px;color:#008080;">77390F5F</div>
<div class="m t" style="left:124px;top:420px;color:#000;">83EC 10</div>
<div class="m t" style="left:267px;top:420px;color:#000;">SUB</div>
<div class="m t" style="left:315px;top:420px;color:#000;">ESP, </div>
<div class="m t" style="left:345px;top:420px;color:#008000;">0x10</div>
<div class="m t" style="left:3px;top:432px;color:#008080;">77390F62</div>
<div class="m t" style="left:124px;top:432px;color:#000;">803D EC02FE7F 00</div>
<div class="m t" style="left:267px;top:432px;color:#000;">CMP</div>
<div class="m t" style="left:315px;top:432px;color:#000;">BYTE PTR [0x7FFE02EC]</div>
<div class="m t" style="left:441px;top:432px;color:#000;">, </div>
<div class="m t" style="left:453px;top:432px;color:#008000;">0x0</div>
<div class="m t" style="left:3px;top:444px;color:#008080;">77390F69</div>
<svg style="left:111px;top:450px" width="6" height="4"><path d="M0.5 0.5 L3 3 L5.5 0.5" stroke="#000" fill="none"/></svg>
<div class="m t" style="left:124px;top:444px;color:#000;">74 11</div>
<div style="left:267px;top:444px;width:12px;height:12px;background:#ffff00;"></div>
<div class="m t" style="left:267px;top:444px;color:#ff0000;">JE</div>
<div class="m t" style="left:315px;top:444px;color:#800000;">SHORT 77390F7C</div>
</div>
<div style="left:114px;top:83px;width:1px;height:452px;background:#008000;"></div>
<div style="left:269px;top:83px;width:1px;height:452px;background:#008000;"></div>
<div style="left:591px;top:83px;width:1px;height:452px;background:#008000;"></div>
<div style="left:726px;top:67px;width:16px;height:468px;background:repeating-conic-gradient(#d4d0c8 0 25%,#fff 0 50%) 0 0/2px 2px"></div>
<div style="left:726px;top:67px;width:16px;height:16px;background:#404040;"></div>
<div style="left:726px;top:67px;width:15px;height:15px;background:#d4d0c8;"></div>
<div style="left:727px;top:68px;width:14px;height:14px;background:#808080;"></div>
<div style="left:727px;top:68px;width:13px;height:13px;background:#fff;"></div>
<div style="left:728px;top:69px;width:12px;height:12px;background:#d4d0c8;"></div>
<svg style="left:730px;top:73px" width="7" height="4"><path d="M3.5 0 L7 4 L0 4Z" fill="#000"/></svg>
<div style="left:726px;top:367px;width:16px;height:16px;background:#404040;"></div>
<div style="left:726px;top:367px;width:15px;height:15px;background:#d4d0c8;"></div>
<div style="left:727px;top:368px;width:14px;height:14px;background:#808080;"></div>
<div style="left:727px;top:368px;width:13px;height:13px;background:#fff;"></div>
<div style="left:728px;top:369px;width:12px;height:12px;background:#d4d0c8;"></div>
<div style="left:726px;top:519px;width:16px;height:16px;background:#404040;"></div>
<div style="left:726px;top:519px;width:15px;height:15px;background:#d4d0c8;"></div>
<div style="left:727px;top:520px;width:14px;height:14px;background:#808080;"></div>
<div style="left:727px;top:520px;width:13px;height:13px;background:#fff;"></div>
<div style="left:728px;top:521px;width:12px;height:12px;background:#d4d0c8;"></div>
<svg style="left:730px;top:525px" width="7" height="4"><path d="M0 0 L7 0 L3.5 4Z" fill="#000"/></svg>
<div style="left:742px;top:65px;width:322px;height:519px;background:#008080;"></div>
<div style="left:744px;top:67px;width:318px;height:515px;background:#fffbf0;"></div>
<div style="left:742px;top:65px;width:2px;height:472px;background:#000;"></div>
<div style="left:744px;top:67px;width:318px;height:16px;background:#c0c0c0;"></div>
<div style="left:744px;top:67px;width:318px;height:1px;background:#fff;"></div>
<div style="left:744px;top:82px;width:318px;height:1px;background:#000;"></div>
<div style="left:744px;top:67px;width:1px;height:15px;background:#fff;"></div>
<div class="m" style="left:747px;top:71px;color:#000;">Registers (FPU)</div>
<svg style="left:988px;top:70px" width="6" height="9"><path d="M5 0.5 L0.8 4.5 L5 8.5" stroke="#000" fill="none"/></svg>
<svg style="left:1017px;top:70px" width="6" height="9"><path d="M5 0.5 L0.8 4.5 L5 8.5" stroke="#000" fill="none"/></svg>
<svg style="left:1047px;top:70px" width="6" height="9"><path d="M5 0.5 L0.8 4.5 L5 8.5" stroke="#000" fill="none"/></svg>
<div class="m t" style="left:747px;top:83px;color:#008080;">EAX </div>
<div class="m t" style="left:771px;top:83px;color:#ff0000;">00000000</div>
<div class="m t" style="left:747px;top:95px;color:#008080;">ECX </div>
<div class="m t" style="left:771px;top:95px;color:#ff0000;">4E010000</div>
<div class="m t" style="left:747px;top:107px;color:#008080;">EDX </div>
<div class="m t" style="left:771px;top:107px;color:#ff0000;">0008E3C8</div>
<div class="m t" style="left:747px;top:119px;color:#008080;">EBX </div>
<div class="m t" style="left:771px;top:119px;color:#ff0000;">00000000</div>
<div class="m t" style="left:747px;top:131px;color:#008080;">ESP </div>
<div class="m t" style="left:771px;top:131px;color:#ff0000;">000CFB08</div>
<div class="m t" style="left:747px;top:143px;color:#008080;">EBP </div>
<div class="m t" style="left:771px;top:143px;color:#ff0000;">000CFB34</div>
<div class="m t" style="left:747px;top:155px;color:#008080;">ESI </div>
<div class="m t" style="left:771px;top:155px;color:#ff0000;">FFFFFFFE</div>
<div class="m t" style="left:747px;top:167px;color:#008080;">EDI </div>
<div class="m t" style="left:771px;top:167px;color:#008080;">00000000</div>
<div class="m t" style="left:747px;top:185px;color:#008080;">EIP </div>
<div class="m t" style="left:771px;top:185px;color:#ff0000;">77390F3C</div>
<div class="m t" style="left:819px;top:185px;color:#008080;"> ntdll.77390F3C</div>
<div class="m t" style="left:747px;top:203px;color:#008080;">C </div>
<div class="m t" style="left:759px;top:203px;color:#008080;">0</div>
<div class="m t" style="left:765px;top:203px;color:#008080;">  ES 002B 32bit 0(FFFFFFFF)</div>
<div class="m t" style="left:747px;top:215px;color:#008080;">P </div>
<div class="m t" style="left:759px;top:215px;color:#ff0000;">1</div>
<div class="m t" style="left:765px;top:215px;color:#008080;">  CS 0023 32bit 0(FFFFFFFF)</div>
<div class="m t" style="left:747px;top:227px;color:#008080;">A </div>
<div class="m t" style="left:759px;top:227px;color:#008080;">0</div>
<div class="m t" style="left:765px;top:227px;color:#008080;">  SS 002B 32bit 0(FFFFFFFF)</div>
<div class="m t" style="left:747px;top:239px;color:#008080;">Z </div>
<div class="m t" style="left:759px;top:239px;color:#ff0000;">1</div>
<div class="m t" style="left:765px;top:239px;color:#008080;">  DS 002B 32bit 0(FFFFFFFF)</div>
<div class="m t" style="left:747px;top:251px;color:#008080;">S </div>
<div class="m t" style="left:759px;top:251px;color:#008080;">0</div>
<div class="m t" style="left:765px;top:251px;color:#008080;">  FS 0053 32bit 7EFDD000(FFF)</div>
<div class="m t" style="left:747px;top:263px;color:#008080;">T </div>
<div class="m t" style="left:759px;top:263px;color:#008080;">0</div>
<div class="m t" style="left:765px;top:263px;color:#008080;">  GS 002B 32bit 0(FFFFFFFF)</div>
<div class="m t" style="left:747px;top:275px;color:#008080;">D </div>
<div class="m t" style="left:759px;top:275px;color:#008080;">0</div>
<div class="m t" style="left:765px;top:275px;color:#008080;">  </div>
<div class="m t" style="left:747px;top:287px;color:#008080;">O </div>
<div class="m t" style="left:759px;top:287px;color:#008080;">0</div>
<div class="m t" style="left:765px;top:287px;color:#008080;">  LastErr ERROR_SUCCESS (00000000)</div>
<div class="m t" style="left:747px;top:305px;color:#008080;">EFL </div>
<div class="m t" style="left:771px;top:305px;color:#ff0000;">00000246</div>
<div class="m t" style="left:819px;top:305px;color:#008080;"> (NO,NB,E,BE,NS,PE,GE,LE)</div>
<div class="m t" style="left:747px;top:323px;color:#008080;">ST0 empty 0.0</div>
<div class="m t" style="left:747px;top:335px;color:#008080;">ST1 empty 0.0</div>
<div class="m t" style="left:747px;top:347px;color:#008080;">ST2 empty 0.0</div>
<div class="m t" style="left:747px;top:359px;color:#008080;">ST3 empty 0.0</div>
<div class="m t" style="left:747px;top:371px;color:#008080;">ST4 empty 0.0</div>
<div class="m t" style="left:747px;top:383px;color:#008080;">ST5 empty 0.0</div>
<div class="m t" style="left:747px;top:395px;color:#008080;">ST6 empty 0.0</div>
<div class="m t" style="left:747px;top:407px;color:#008080;">ST7 empty 0.0</div>
<div class="m t" style="left:747px;top:419px;color:#008080;">               3 2 1 0      E S P U O Z D I</div>
<div class="m t" style="left:747px;top:431px;color:#008080;">FST 0000  Cond 0 0 0 0  Err 0 0 0 0 0 0 0 0  (GT)</div>
<div class="m t" style="left:747px;top:443px;color:#008080;">FCW 027F  Prec NEAR,53  Mask    1 1 1 1 1 1</div>
<div style="left:4px;top:535px;width:740px;height:49px;background:#008080;"></div>
<div style="left:4px;top:535px;width:740px;height:2px;background:#000;"></div>
<div style="left:6px;top:537px;width:736px;height:45px;background:#fffbf0;"></div>
<div style="left:4px;top:582px;width:600px;height:174px;background:#008080;"></div>
<div style="left:6px;top:584px;width:596px;height:170px;background:#fffbf0;"></div>
<div style="left:6px;top:584px;width:580px;height:16px;background:#c0c0c0;"></div>
<div style="left:6px;top:584px;width:580px;height:1px;background:#fff;"></div>
<div style="left:6px;top:599px;width:580px;height:1px;background:#000;"></div>
<div style="left:6px;top:584px;width:1px;height:15px;background:#fff;"></div>
<div class="m" style="left:9px;top:588px;color:#000;">Address</div>
<div style="left:59px;top:584px;width:1px;height:16px;background:#000;"></div>
<div style="left:60px;top:584px;width:1px;height:15px;background:#fff;"></div>
<div class="m" style="left:63px;top:588px;color:#000;">Value</div>
<div style="left:113px;top:584px;width:1px;height:16px;background:#000;"></div>
<div style="left:114px;top:584px;width:1px;height:15px;background:#fff;"></div>
<div class="m" style="left:117px;top:588px;color:#000;">Comment</div>
<div style="left:6px;top:600px;width:580px;height:154px;overflow:hidden">
<div class="m t" style="left:3px;top:0px;color:#008080;">01014000</div>
<div class="m t" style="left:57px;top:0px;color:#008080;">00000003</div>
<div class="m t" style="left:3px;top:12px;color:#008080;">01014004</div>
<div class="m t" style="left:57px;top:12px;color:#008080;">00000001</div>
<div class="m t" style="left:3px;top:24px;color:#008080;">01014008</div>
<div class="m t" style="left:57px;top:24px;color:#008080;">00000020</div>
<div class="m t" style="left:3px;top:36px;color:#008080;">0101400C</div>
<div class="m t" style="left:57px;top:36px;color:#008080;">0000000A</div>
<div class="m t" style="left:3px;top:48px;color:#008080;">01014010</div>
<div class="m t" style="left:57px;top:48px;color:#008080;">0000000A</div>
<div class="m t" style="left:3px;top:60px;color:#008080;">01014014</div>
<div class="m t" style="left:57px;top:60px;color:#008080;">00000040</div>
<div class="m t" style="left:3px;top:72px;color:#008080;">01014018</div>
<div class="m t" style="left:57px;top:72px;color:#008080;">00630053</div>
<div class="m t" style="left:3px;top:84px;color:#008080;">0101401C</div>
<div class="m t" style="left:57px;top:84px;color:#008080;">00430069</div>
<div class="m t" style="left:3px;top:96px;color:#008080;">01014020</div>
<div class="m t" style="left:57px;top:96px;color:#008080;">006C0061</div>
<div class="m t" style="left:3px;top:108px;color:#008080;">01014024</div>
<div class="m t" style="left:57px;top:108px;color:#008080;">00000063</div>
<div class="m t" style="left:3px;top:120px;color:#008080;">01014028</div>
<div class="m t" style="left:57px;top:120px;color:#008080;">00000000</div>
<div class="m t" style="left:3px;top:132px;color:#008080;">0101402C</div>
<div class="m t" style="left:57px;top:132px;color:#008080;">0000002E</div>
<div class="m t" style="left:3px;top:144px;color:#008080;">01014030</div>
<div class="m t" style="left:57px;top:144px;color:#008080;">00000000</div>
</div>
<div style="left:59px;top:600px;width:1px;height:154px;background:#008000;"></div>
<div style="left:113px;top:600px;width:1px;height:154px;background:#008000;"></div>
<div style="left:586px;top:584px;width:16px;height:170px;background:repeating-conic-gradient(#d4d0c8 0 25%,#fff 0 50%) 0 0/2px 2px"></div>
<div style="left:586px;top:584px;width:16px;height:16px;background:#404040;"></div>
<div style="left:586px;top:584px;width:15px;height:15px;background:#d4d0c8;"></div>
<div style="left:587px;top:585px;width:14px;height:14px;background:#808080;"></div>
<div style="left:587px;top:585px;width:13px;height:13px;background:#fff;"></div>
<div style="left:588px;top:586px;width:12px;height:12px;background:#d4d0c8;"></div>
<svg style="left:590px;top:590px" width="7" height="4"><path d="M3.5 0 L7 4 L0 4Z" fill="#000"/></svg>
<div style="left:586px;top:600px;width:16px;height:16px;background:#404040;"></div>
<div style="left:586px;top:600px;width:15px;height:15px;background:#d4d0c8;"></div>
<div style="left:587px;top:601px;width:14px;height:14px;background:#808080;"></div>
<div style="left:587px;top:601px;width:13px;height:13px;background:#fff;"></div>
<div style="left:588px;top:602px;width:12px;height:12px;background:#d4d0c8;"></div>
<div style="left:586px;top:738px;width:16px;height:16px;background:#404040;"></div>
<div style="left:586px;top:738px;width:15px;height:15px;background:#d4d0c8;"></div>
<div style="left:587px;top:739px;width:14px;height:14px;background:#808080;"></div>
<div style="left:587px;top:739px;width:13px;height:13px;background:#fff;"></div>
<div style="left:588px;top:740px;width:12px;height:12px;background:#d4d0c8;"></div>
<svg style="left:590px;top:744px" width="7" height="4"><path d="M0 0 L7 0 L3.5 4Z" fill="#000"/></svg>
<div style="left:602px;top:582px;width:462px;height:174px;background:#008080;"></div>
<div style="left:604px;top:584px;width:458px;height:170px;background:#fffbf0;"></div>
<div style="left:604px;top:584px;width:442px;height:16px;background:#c0c0c0;"></div>
<div style="left:604px;top:584px;width:442px;height:1px;background:#fff;"></div>
<div style="left:604px;top:599px;width:442px;height:1px;background:#000;"></div>
<div style="left:604px;top:584px;width:1px;height:15px;background:#fff;"></div>
<div class="m" style="left:607px;top:588px;color:#000;">Address</div>
<div style="left:659px;top:584px;width:1px;height:16px;background:#000;"></div>
<div style="left:660px;top:584px;width:1px;height:15px;background:#fff;"></div>
<div class="m" style="left:663px;top:588px;color:#000;">Value</div>
<div style="left:719px;top:584px;width:1px;height:16px;background:#000;"></div>
<div style="left:720px;top:584px;width:1px;height:15px;background:#fff;"></div>
<div class="m" style="left:723px;top:588px;color:#000;">Comment</div>
<div style="left:604px;top:600px;width:442px;height:154px;overflow:hidden">
<div style="left:56px;top:0px;width:386px;height:12px;background:#a6caf0;"></div>
<div style="left:0px;top:0px;width:55px;height:12px;background:#000;"></div>
<div class="m t" style="left:3px;top:0px;color:#fffbf0;">000CFB08</div>
<div class="m t" style="left:65px;top:0px;color:#008080;">76F404BD</div>
<div class="m t" style="left:3px;top:12px;color:#008080;">000CFB0C</div>
<div class="m t" style="left:65px;top:12px;color:#008080;">00000000</div>
<div class="m t" style="left:3px;top:24px;color:#008080;">000CFB10</div>
<div class="m t" style="left:65px;top:24px;color:#008080;">00000000</div>
<div class="m t" style="left:3px;top:36px;color:#008080;">000CFB14</div>
<div class="m t" style="left:65px;top:36px;color:#008080;">7EFDE000</div>
<div class="m t" style="left:3px;top:48px;color:#008080;">000CFB18</div>
<div class="m t" style="left:65px;top:48px;color:#008080;">00000000</div>
<div class="m t" style="left:3px;top:60px;color:#008080;">000CFB1C</div>
<div class="m t" style="left:65px;top:60px;color:#008080;">000CFB08</div>
<div class="m t" style="left:3px;top:72px;color:#008080;">000CFB20</div>
<div class="m t" style="left:65px;top:72px;color:#008080;">77361ECD</div>
<div class="m t" style="left:119px;top:72px;color:#008080;">ntdll.77361ECD</div>
<div class="m t" style="left:3px;top:84px;color:#008080;">000CFB24</div>
<div class="m t" style="left:65px;top:84px;color:#008080;">000CFCF0</div>
<div class="m t" style="left:119px;top:84px;color:#008080;">Pointer to next SEH record</div>
<div class="m t" style="left:3px;top:96px;color:#008080;">000CFB28</div>
<div class="m t" style="left:65px;top:96px;color:#008080;">77361ECD</div>
<div class="m t" style="left:119px;top:96px;color:#008080;">SE handler</div>
<div class="m t" style="left:3px;top:108px;color:#008080;">000CFB2C</div>
<div class="m t" style="left:65px;top:108px;color:#008080;">01C94211</div>
<div class="m t" style="left:3px;top:120px;color:#008080;">000CFB30</div>
<div class="m t" style="left:65px;top:120px;color:#008080;">00000000</div>
<div class="m t" style="left:3px;top:132px;color:#008080;">000CFB34</div>
<div class="m t" style="left:65px;top:132px;color:#008080;">000CFCB0</div>
<div class="m t" style="left:3px;top:144px;color:#008080;">000CFB38</div>
<div class="m t" style="left:65px;top:144px;color:#008080;">77371323</div>
<div class="m t" style="left:119px;top:144px;color:#008080;">RETURN to ntdll.77371323 from ntdll.77390F0F</div>
<div style="left:60px;top:137px;width:2px;height:20px;background:#000;"></div>
<div style="left:60px;top:137px;width:5px;height:2px;background:#000;"></div>
</div>
<div style="left:659px;top:600px;width:1px;height:154px;background:#008000;"></div>
<div style="left:719px;top:600px;width:1px;height:154px;background:#008000;"></div>
<div style="left:1046px;top:584px;width:16px;height:170px;background:repeating-conic-gradient(#d4d0c8 0 25%,#fff 0 50%) 0 0/2px 2px"></div>
<div style="left:1046px;top:584px;width:16px;height:16px;background:#404040;"></div>
<div style="left:1046px;top:584px;width:15px;height:15px;background:#d4d0c8;"></div>
<div style="left:1047px;top:585px;width:14px;height:14px;background:#808080;"></div>
<div style="left:1047px;top:585px;width:13px;height:13px;background:#fff;"></div>
<div style="left:1048px;top:586px;width:12px;height:12px;background:#d4d0c8;"></div>
<svg style="left:1050px;top:590px" width="7" height="4"><path d="M3.5 0 L7 4 L0 4Z" fill="#000"/></svg>
<div style="left:1046px;top:710px;width:16px;height:16px;background:#404040;"></div>
<div style="left:1046px;top:710px;width:15px;height:15px;background:#d4d0c8;"></div>
<div style="left:1047px;top:711px;width:14px;height:14px;background:#808080;"></div>
<div style="left:1047px;top:711px;width:13px;height:13px;background:#fff;"></div>
<div style="left:1048px;top:712px;width:12px;height:12px;background:#d4d0c8;"></div>
<div style="left:1046px;top:738px;width:16px;height:16px;background:#404040;"></div>
<div style="left:1046px;top:738px;width:15px;height:15px;background:#d4d0c8;"></div>
<div style="left:1047px;top:739px;width:14px;height:14px;background:#808080;"></div>
<div style="left:1047px;top:739px;width:13px;height:13px;background:#fff;"></div>
<div style="left:1048px;top:740px;width:12px;height:12px;background:#d4d0c8;"></div>
<svg style="left:1050px;top:744px" width="7" height="4"><path d="M0 0 L7 0 L3.5 4Z" fill="#000"/></svg>
<div class="m" style="left:12px;top:763px;color:#ff0000;">M1</div>
<div class="m" style="left:38px;top:763px;color:#000;">M2</div>
<div class="m" style="left:64px;top:763px;color:#000;">M3</div>
<div class="m" style="left:90px;top:763px;color:#000;">M4</div>
<div class="m" style="left:116px;top:763px;color:#000;">M5</div>
<div class="m" style="left:230px;top:766px;color:#000;">Command:</div>
<div style="left:294px;top:757px;width:200px;height:19px;background:#fff;"></div>
<div style="left:294px;top:757px;width:199px;height:18px;background:#808080;"></div>
<div style="left:295px;top:758px;width:198px;height:17px;background:#d4d0c8;"></div>
<div style="left:295px;top:758px;width:197px;height:16px;background:#404040;"></div>
<div style="left:296px;top:759px;width:196px;height:15px;background:#fff;"></div>
<div style="left:297px;top:760px;width:85px;height:12px;background:#0a246a;"></div>
<div class="m t" style="left:297px;top:760px;color:#fff;">dd ws2_32.send</div>
<div style="left:476px;top:759px;width:16px;height:15px;background:#404040;"></div>
<div style="left:476px;top:759px;width:15px;height:14px;background:#d4d0c8;"></div>
<div style="left:477px;top:760px;width:14px;height:13px;background:#808080;"></div>
<div style="left:477px;top:760px;width:13px;height:12px;background:#fff;"></div>
<div style="left:478px;top:761px;width:12px;height:11px;background:#d4d0c8;"></div>
<svg style="left:480px;top:765px" width="7" height="4"><path d="M0 0 L7 0 L3.5 4Z" fill="#000"/></svg>
<div style="left:504px;top:759px;width:437px;height:17px;background:#fff;"></div>
<div style="left:504px;top:759px;width:436px;height:16px;background:#808080;"></div>
<div style="left:505px;top:760px;width:435px;height:15px;background:#d4d0c8;"></div>
<div class="m" style="left:966px;top:763px;color:#ff0000;">ESP</div>
<div class="m" style="left:1000px;top:763px;color:#000;">EBP</div>
<div class="m" style="left:1034px;top:763px;color:#000;">NONE</div>
<div style="left:4px;top:776px;width:1060px;height:1px;background:#fff;"></div>
<div style="left:5px;top:778px;width:1027px;height:17px;background:#fff;"></div>
<div style="left:5px;top:778px;width:1026px;height:16px;background:#808080;"></div>
<div style="left:6px;top:779px;width:1025px;height:15px;background:#c0c0c0;"></div>
<div class="s" style="left:9px;top:780px;color:#000;">System startup breakpoint</div>
<div style="left:1033px;top:778px;width:30px;height:17px;background:#fff;"></div>
<div style="left:1033px;top:778px;width:29px;height:16px;background:#808080;"></div>
<div style="left:1034px;top:779px;width:28px;height:15px;background:#c0c0c0;"></div>
<div style="left:370px;top:261px;width:179px;height:196px;background:#404040;"></div>
<div style="left:370px;top:261px;width:178px;height:195px;background:#d4d0c8;"></div>
<div style="left:371px;top:262px;width:177px;height:194px;background:#808080;"></div>
<div style="left:371px;top:262px;width:176px;height:193px;background:#fff;"></div>
<div style="left:372px;top:263px;width:175px;height:192px;background:#d4d0c8;"></div>
<div style="left:373px;top:264px;width:173px;height:18px;background:linear-gradient(to right,#0a246a,#a6caf0)"></div>
<div class="tt" style="left:375px;top:268px;color:#fff;">Option</div>
<div style="left:528px;top:266px;width:16px;height:14px;background:#404040;"></div>
<div style="left:528px;top:266px;width:15px;height:13px;background:#d4d0c8;"></div>
<div style="left:529px;top:267px;width:14px;height:12px;background:#808080;"></div>
<div style="left:529px;top:267px;width:13px;height:11px;background:#fff;"></div>
<div style="left:530px;top:268px;width:12px;height:10px;background:#d4d0c8;"></div>
<svg style="left:528px;top:266px" width="16" height="14"><path d="M4 3.2 L11.8 10 M11.8 3.2 L4 10" stroke="#000" stroke-width="1.7"/></svg>
<div style="left:387px;top:296px;width:143px;height:120px;border:1px solid #808080;box-sizing:border-box"></div>
<div style="left:388px;top:297px;width:143px;height:120px;border:1px solid #fff;box-sizing:border-box"></div>
<div style="left:393px;top:290px;width:64px;height:12px;background:#d4d0c8;"></div>
<div class="s" style="left:395px;top:291px;color:#000;letter-spacing:-0.4px">DisasmMode</div>
<svg style="left:413px;top:320px" width="12" height="12"><path d="M10.5 2.5 A5.5 5.5 0 0 0 1.5 9.5" stroke="#808080" fill="none"/><path d="M1.5 9.5 A5.5 5.5 0 0 0 10.5 2.5" stroke="#fff" fill="none"/><circle cx="6" cy="6" r="4.3" fill="#fff"/><path d="M9.3 2.7 A4.5 4.5 0 0 0 2.7 9.3" stroke="#404040" fill="none"/><circle cx="6" cy="6" r="1.8" fill="#000"/></svg>
<svg style="left:413px;top:351px" width="12" height="12"><path d="M10.5 2.5 A5.5 5.5 0 0 0 1.5 9.5" stroke="#808080" fill="none"/><path d="M1.5 9.5 A5.5 5.5 0 0 0 10.5 2.5" stroke="#fff" fill="none"/><circle cx="6" cy="6" r="4.3" fill="#fff"/><path d="M9.3 2.7 A4.5 4.5 0 0 0 2.7 9.3" stroke="#404040" fill="none"/></svg>
<svg style="left:413px;top:382px" width="12" height="12"><path d="M10.5 2.5 A5.5 5.5 0 0 0 1.5 9.5" stroke="#808080" fill="none"/><path d="M1.5 9.5 A5.5 5.5 0 0 0 10.5 2.5" stroke="#fff" fill="none"/><circle cx="6" cy="6" r="4.3" fill="#fff"/><path d="M9.3 2.7 A4.5 4.5 0 0 0 2.7 9.3" stroke="#404040" fill="none"/></svg>
<div class="s" style="left:430px;top:321px;color:#000;">Replace Part</div>
<div style="left:429px;top:319px;width:63px;height:16px;border:1px dotted #000;box-sizing:border-box"></div>
<div class="s" style="left:430px;top:352px;color:#000;">Replace All</div>
<div class="s" style="left:430px;top:383px;color:#000;">Disable</div>
<div style="left:418px;top:423px;width:75px;height:23px;background:#404040;"></div>
<div style="left:418px;top:423px;width:74px;height:22px;background:#fff;"></div>
<div style="left:419px;top:424px;width:73px;height:21px;background:#808080;"></div>
<div style="left:419px;top:424px;width:72px;height:20px;background:#d4d0c8;"></div>
<div class="s" style="left:416px;top:428px;color:#000;width:75px;text-align:center">Close</div></body></html>
